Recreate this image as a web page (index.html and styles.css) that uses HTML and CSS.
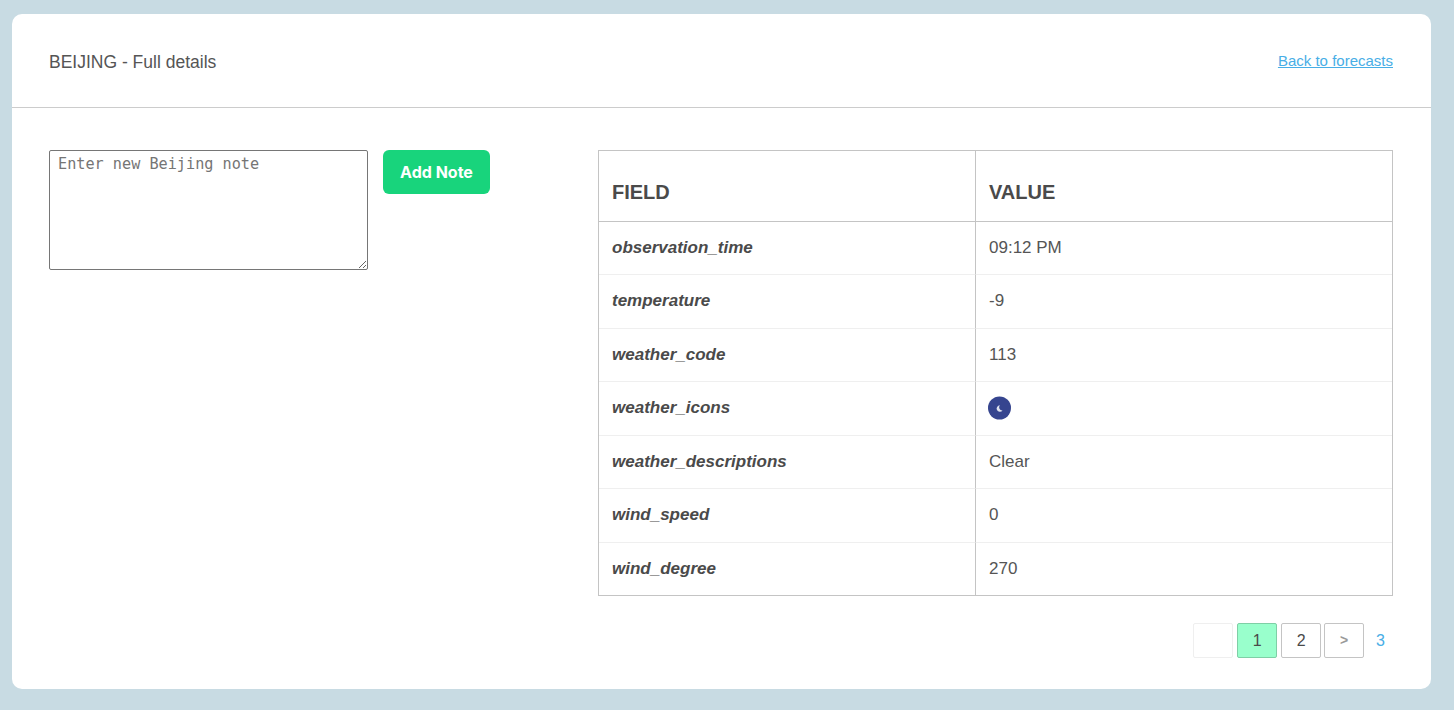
FILE: index.html
```html
<!DOCTYPE html>
<html lang="en">
<head>
  <meta charset="UTF-8">
  <meta name="viewport" content="width=device-width, initial-scale=1">
  <title>Beijing - Full details</title>
  <link rel="stylesheet" href="styles.css">
</head>
<body>
  <main class="card">
    <header class="card-header">
      <h1 class="card-title">BEIJING - Full details</h1>
      <a class="back-link" href="#">Back to forecasts</a>
    </header>

    <div class="card-body">
      <form class="note-form">
        <textarea class="note-input" placeholder="Enter new Beijing note"></textarea>
        <button class="note-btn" type="button">Add Note</button>
      </form>

      <section class="details">
        <table class="details-table">
          <thead>
            <tr><th class="col-field">FIELD</th><th>VALUE</th></tr>
          </thead>
          <tbody>
            <tr><td class="field">observation_time</td><td>09:12 PM</td></tr>
            <tr><td class="field">temperature</td><td>-9</td></tr>
            <tr><td class="field">weather_code</td><td>113</td></tr>
            <tr>
              <td class="field">weather_icons</td>
              <td>
                <svg class="weather-icon" viewBox="0 0 24 24" aria-label="Clear night">
                  <circle cx="12" cy="12" r="12" fill="#36458f"/>
                  <path d="M12.4 9.2a3.4 3.4 0 1 0 2.8 5.3a3.2 3.2 0 0 1-2.8-5.3z" fill="#dfe2ee"/>
                </svg>
              </td>
            </tr>
            <tr><td class="field">weather_descriptions</td><td>Clear</td></tr>
            <tr><td class="field">wind_speed</td><td>0</td></tr>
            <tr><td class="field">wind_degree</td><td>270</td></tr>
          </tbody>
        </table>

        <nav class="pager">
          <span class="page page-blank"></span>
          <span class="page page-current">1</span>
          <a class="page" href="#">2</a>
          <a class="page page-next" href="#">&gt;</a>
          <a class="page-last" href="#">3</a>
        </nav>
      </section>
    </div>
  </main>
</body>
</html>
```

FILE: styles.css
```css
/* Global */
*, *::before, *::after { box-sizing: border-box; }
html, body { height: 100%; }
body {
  margin: 0;
  padding: 14px 23px 21px 12px;
  background: #c8dbe3;
  color: #4a4a4a;
  font-family: "Liberation Sans", Arial, sans-serif;
  font-size: 17px;
  line-height: 1.5;
  overflow: hidden;
}

/* Card */
.card {
  height: 675px;
  background: #fff;
  border-radius: 10px;
}
.card-header {
  display: flex;
  align-items: center;
  justify-content: space-between;
  height: 94px;
  padding: 2px 38px 0 37px;
  border-bottom: 1px solid #ccc;
}
.card-title { margin: 2px 0 0; color: #555; font-size: 17.5px; font-weight: 400; }
.back-link { color: #48aee6; font-size: 15px; }

.card-body {
  display: flex;
  justify-content: space-between;
  padding: 42px 38px 0 37px;
}

/* Note form */
.note-form { display: flex; align-items: flex-start; gap: 15px; }
.note-input {
  display: block;
  width: 319px;
  height: 120px;
  margin: 0;
  padding: 3px 8px;
  border: 1px solid #767676;
  border-radius: 2px;
  font-family: "DejaVu Sans Mono", monospace;
  font-size: 15.2px;
  line-height: 20px;
}
.note-input::placeholder { color: #757575; }
.note-btn {
  width: 107px;
  height: 44px;
  border: 0;
  border-radius: 6px;
  background: #18d47c;
  color: #fff;
  font-family: Inter, "Liberation Sans", sans-serif;
  font-size: 16px;
  font-weight: 700;
}

/* Table */
.details { width: 795px; }
.details-table {
  width: 100%;
  table-layout: fixed;
  border-collapse: separate;
  border-spacing: 0;
  border: 1px solid #c4c4c4;
}
.details-table th {
  height: 70.8px;
  padding: 12px 13px 0;
  border-bottom: 1px solid #c4c4c4;
  font-size: 20px;
  font-weight: 700;
  text-align: left;
}
.details-table .col-field { width: 377px; border-right: 1px solid #c4c4c4; }
.details-table td {
  height: 53.5px;
  padding: 0 13px 1.4px;
  border-bottom: 1px solid #efefef;
  color: #555;
}
.details-table tr:last-child td { height: 52.5px; border-bottom: 0; }
.details-table .field {
  border-right: 1px solid #c4c4c4;
  color: #4a4a4a;
  font-style: italic;
  font-weight: 700;
}
.weather-icon { display: block; width: 23px; height: 24px; margin-left: -1px; }

/* Pagination */
.pager {
  display: flex;
  justify-content: flex-end;
  align-items: center;
  margin-top: 27px;
  padding-right: 8px;
  font-size: 16px;
}
.page {
  display: flex;
  align-items: center;
  justify-content: center;
  width: 40px;
  height: 35px;
  margin-right: 4px;
  border: 1px solid #c4c4c4;
  border-radius: 2px;
  color: #4a4a4a;
  text-decoration: none;
}
.page-blank { border-color: #efefef; }
.page-current { background: #99ffcc; border-color: #7fcfa6; }
.page-next { margin-left: -1px; color: #999; font-size: 14px; font-weight: 700; }
.page-last { margin-left: 8px; color: #48aee6; text-decoration: none; }
```
